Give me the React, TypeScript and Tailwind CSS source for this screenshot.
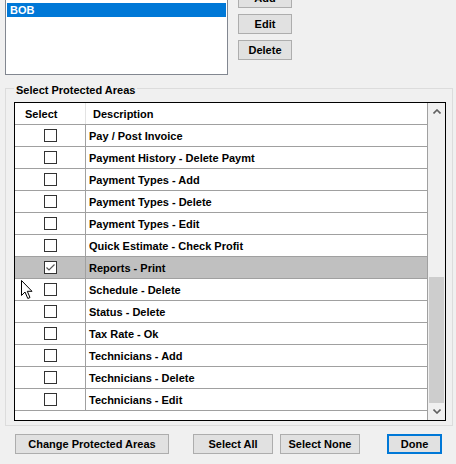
const areas = [
  { label: "Pay / Post Invoice", checked: false },
  { label: "Payment History - Delete Paymt", checked: false },
  { label: "Payment Types - Add", checked: false },
  { label: "Payment Types - Delete", checked: false },
  { label: "Payment Types - Edit", checked: false },
  { label: "Quick Estimate - Check Profit", checked: false },
  { label: "Reports - Print", checked: true, selected: true },
  { label: "Schedule - Delete", checked: false },
  { label: "Status - Delete", checked: false },
  { label: "Tax Rate - Ok", checked: false },
  { label: "Technicians - Add", checked: false },
  { label: "Technicians - Delete", checked: false },
  { label: "Technicians - Edit", checked: false },
];

function Checkbox({ checked }: { checked: boolean }) {
  return (
    <div className="flex h-[13px] w-[13px] items-center justify-center border border-[#333333] bg-white">
      {checked && (
        <svg width="11" height="11" viewBox="0 0 11 11">
          <path d="M1.5 5.5 L4 8 L9.5 2.5" fill="none" stroke="#555555" strokeWidth="1.2" />
        </svg>
      )}
    </div>
  );
}

function WinButton({ label, className = "" }: { label: string; className?: string }) {
  return (
    <button
      type="button"
      className={`flex h-[20px] items-center justify-center border border-[#adadad] bg-[#e1e1e1] text-[11px] font-bold leading-[13px] text-black ${className}`}
    >
      {label}
    </button>
  );
}

export default function App() {
  return (
    <div className="relative h-[464px] w-[456px] overflow-hidden bg-[#f0f0f0] font-['Liberation_Sans',Arial,sans-serif] text-[11px] text-black">
      {/* user list + buttons */}
      <div className="-mt-[12px] flex items-start pl-[5px]">
        <div className="mt-[2px] h-[85px] w-[223px] border border-[#828790] bg-white px-px pt-[12px]">
          <div className="h-[14px] bg-[#0078d7] pl-[3px] font-bold leading-[14px] text-white">BOB</div>
        </div>
        <div className="ml-[10px] flex flex-col gap-[6px]">
          <WinButton label="Add" className="w-[54px]" />
          <WinButton label="Edit" className="w-[54px]" />
          <WinButton label="Delete" className="w-[54px]" />
        </div>
      </div>

      {/* group box */}
      <div className="relative mt-[13px] ml-[5px] w-[448px] border border-[#dcdcdc] pb-[4px]">
        <span className="absolute left-[8px] top-[-5px] bg-[#f0f0f0] px-[2px] font-bold leading-[13px]">
          Select Protected Areas
        </span>
        <div className="mt-[13px] ml-[8px] flex h-[319px] w-[432px] border border-black bg-white">
          <div className="flex w-[413px] flex-col border-r border-[#a0a0a0]">
            <div className="flex h-[22px] shrink-0 border-b border-[#a0a0a0] font-bold leading-[22px]">
              <div className="w-[71px] border-r border-[#e3e3e3] pl-[10px]">Select</div>
              <div className="flex-1 pl-[7px]">Description</div>
            </div>
            {areas.map((area) => (
              <div
                key={area.label}
                className={`flex h-[22px] shrink-0 border-b border-[#a0a0a0] font-bold leading-[22px] ${area.selected ? "bg-[#c0c0c0]" : ""}`}
              >
                <div className="flex w-[71px] items-center justify-center border-r border-[#a0a0a0]">
                  <Checkbox checked={area.checked} />
                </div>
                <div className="flex-1 overflow-hidden pl-[3px]">{area.label}</div>
              </div>
            ))}
          </div>
          {/* scrollbar */}
          <div className="flex w-[17px] flex-col bg-[#f0f0f0]">
            <div className="flex h-[17px] items-center justify-center">
              <svg width="8" height="5" viewBox="0 0 8 5">
                <path d="M0.5 4.5 L4 1 L7.5 4.5" fill="none" stroke="#606060" strokeWidth="1.6" />
              </svg>
            </div>
            <div className="flex flex-1 flex-col justify-end">
              <div className="mx-px h-[126px] bg-[#cdcdcd]" />
            </div>
            <div className="flex h-[17px] items-center justify-center">
              <svg width="8" height="5" viewBox="0 0 8 5">
                <path d="M0.5 0.5 L4 4 L7.5 0.5" fill="none" stroke="#606060" strokeWidth="1.6" />
              </svg>
            </div>
          </div>
        </div>
      </div>

      {/* bottom buttons */}
      <div className="mt-[8px] flex pl-[15px]">
        <WinButton label="Change Protected Areas" className="w-[154px]" />
        <WinButton label="Select All" className="ml-[24px] w-[80px]" />
        <WinButton label="Select None" className="ml-[7px] w-[80px]" />
        <button
          type="button"
          className="ml-[27px] flex h-[20px] w-[55px] items-center justify-center border-2 border-[#0078d7] bg-[#e1e1e1] text-[11px] font-bold leading-[13px]"
        >
          Done
        </button>
      </div>

      {/* mouse pointer */}
      <svg className="absolute left-[21px] top-[280px]" width="13" height="20" viewBox="0 0 13 20">
        <path
          d="M0.5 0.5 L0.5 15.5 L4 12 L6.8 18.5 L9 17.5 L6.3 11.3 L11 11.3 Z"
          fill="white"
          stroke="black"
          strokeWidth="1"
          strokeLinejoin="miter"
        />
      </svg>
    </div>
  );
}
